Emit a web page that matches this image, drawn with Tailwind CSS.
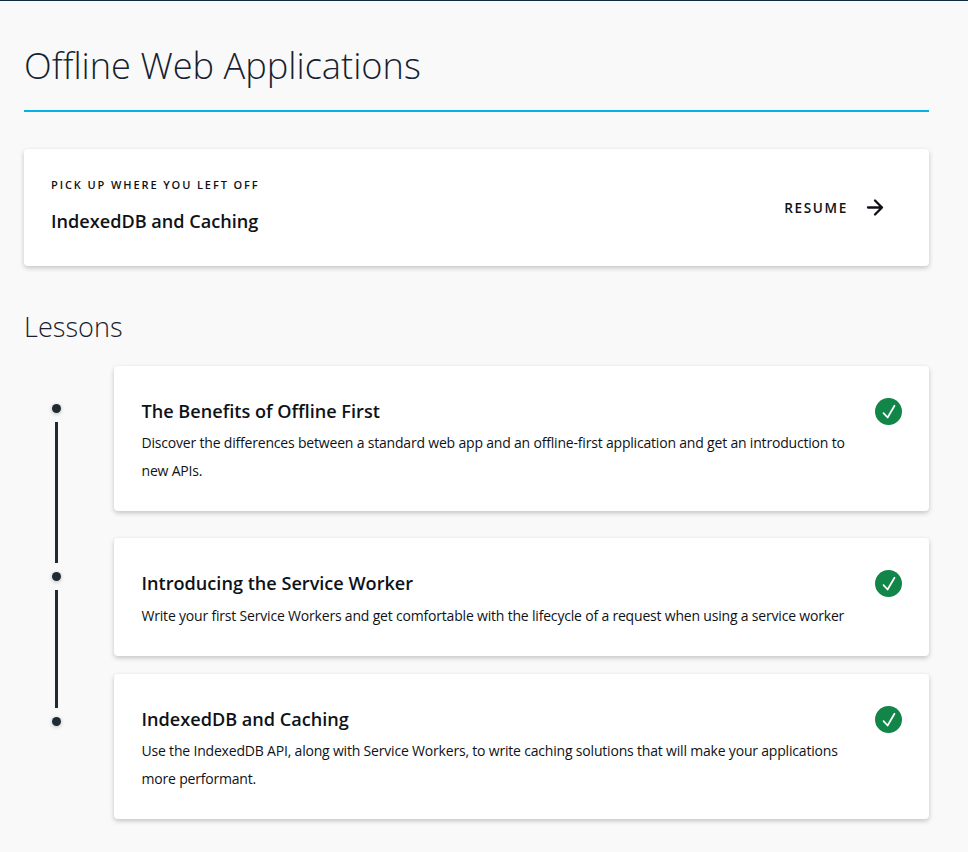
<!DOCTYPE html>
<html lang="en"><head><meta charset="utf-8"><title>Offline Web Applications</title>
<script src="https://cdn.jsdelivr.net/npm/@tailwindcss/browser@4"></script></head>
<body class="bg-[#f9f9f9] font-['Open_Sans',sans-serif] text-[#0e1217]">
<svg class="hidden"><symbol id="check" viewBox="0 0 27 27"><circle cx="13.5" cy="13.5" r="13.5" fill="#128548"/><path d="M8.500 15.200L12.600 19.500L19.500 7.700" fill="none" stroke="#fff" stroke-width="1.750" stroke-linecap="round" stroke-linejoin="round"/></symbol></svg>
<main class="h-[852px] overflow-hidden border-t border-[#0f2b41] pl-6 pr-[39px]">
<h1 class="h-[109px] pt-[38px] text-[36.2px] leading-[52px] font-light text-[#171f30]">Offline Web Applications</h1>
<div class="h-[2px] bg-[#02b3e4]"></div>
<section class="mt-[37px] flex h-[117px] justify-between rounded bg-white pl-[27px] pr-[42px] shadow-[0_2px_5px_rgba(0,0,0,0.22)]">
<div class="pt-[28px]"><p class="text-[11px] leading-4 font-semibold tracking-[1.9px]">PICK UP WHERE YOU LEFT OFF</p>
<h2 class="mt-[16px] text-[18.13px] leading-6 font-semibold">IndexedDB and Caching</h2></div>
<div class="flex items-center gap-[15px] text-[13.6px] font-semibold tracking-[1.65px]"><span class="pt-px">RESUME</span>
<svg class="size-6" viewBox="0 0 24 24" fill="none" stroke="currentColor" stroke-width="2.300"><path d="M5 11.500h14M12 4.500l7 7-7 7" stroke-linecap="round" stroke-linejoin="round"/></svg></div>
</section>
<h2 class="mt-[40px] h-[60px] pt-px text-[27.100px] leading-[40px] font-light text-[#171f30]">Lessons</h2>
<div class="flex">
<div class="flex w-[90px] flex-col items-center pr-[25px] pt-[38px]">
<i class="size-[9px] rounded-full bg-[#1f2b33] shadow-[0_1px_4px_rgba(0,0,0,0.25)]"></i><i class="mt-[9px] h-[141px] w-[3px] bg-[#1f2b33]"></i>
<i class="mt-[9px] size-[9px] rounded-full bg-[#1f2b33] shadow-[0_1px_4px_rgba(0,0,0,0.25)]"></i><i class="mt-[9px] h-[118px] w-[3px] bg-[#1f2b33]"></i>
<i class="mt-[9px] size-[9px] rounded-full bg-[#1f2b33] shadow-[0_1px_4px_rgba(0,0,0,0.25)]"></i></div>
<div class="flex-1">
<article class="flex h-[145px] justify-between rounded bg-white pl-[27.500px] pr-[27px] pt-[32px] shadow-[0_2px_5px_rgba(0,0,0,0.22)]"><div class="w-[716px]"><h3 class="text-[18.13px] leading-[27px] font-semibold">The Benefits of Offline First</h3><p class="mt-[4px] text-[14px] leading-[28px] tracking-[-0.19px]">Discover the differences between a standard web app and an offline-first application and get an introduction to<br>new APIs.</p></div>
<svg class="size-[27px]"><use href="#check"/></svg></article>
<article class="mt-[27px] flex h-[118px] justify-between rounded bg-white pl-[27.500px] pr-[27px] pt-[32px] shadow-[0_2px_5px_rgba(0,0,0,0.22)]"><div class="w-[716px]"><h3 class="text-[18.13px] leading-[27px] font-semibold">Introducing the Service Worker</h3><p class="mt-[5px] text-[14px] leading-[28px] tracking-[-0.19px]">Write your first Service Workers and get comfortable with the lifecycle of a request when using a service worker</p></div>
<svg class="size-[27px]"><use href="#check"/></svg></article>
<article class="mt-[18px] flex h-[145px] justify-between rounded bg-white pl-[27.500px] pr-[27px] pt-[32px] shadow-[0_2px_5px_rgba(0,0,0,0.22)]"><div class="w-[716px]"><h3 class="text-[18.13px] leading-[27px] font-semibold">IndexedDB and Caching</h3><p class="mt-[4px] text-[14px] leading-[28px] tracking-[-0.19px]">Use the IndexedDB API, along with Service Workers, to write caching solutions that will make your applications<br>more performant.</p></div>
<svg class="size-[27px]"><use href="#check"/></svg></article>
</div></div>
</main></body></html>
